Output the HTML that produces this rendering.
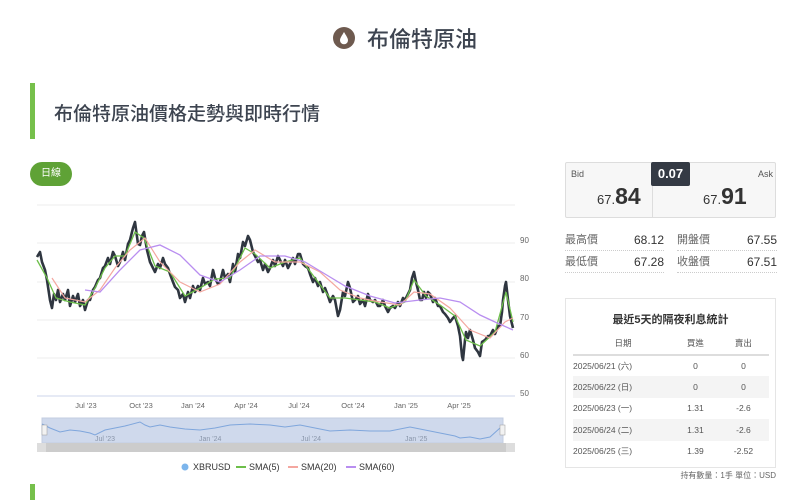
<!DOCTYPE html>
<html><head><meta charset="utf-8"><style>
*{margin:0;padding:0;box-sizing:border-box}
body{width:800px;height:500px;background:#fff;font-family:"Liberation Sans","Noto Sans CJK TC",sans-serif;color:#333;position:relative;overflow:hidden}
.abs{position:absolute}
.title{left:333px;top:22px;font-size:22px;color:#3d4450;display:flex;align-items:center;gap:12px;font-weight:500}
.drop{width:22px;height:22px;border-radius:50%;background:#6e5a4f;position:relative}
.h2bar{left:30px;top:83px;width:5px;height:56px;background:#76c04b}
.h2{left:54px;top:99px;font-size:19px;color:#3d4450;font-weight:500}
.btn{left:30px;top:162px;width:42px;height:24px;border-radius:12px;background:#5fa236;color:#fff;font-size:10px;text-align:center;line-height:24px}
.quote{left:565px;top:162px;width:211px;height:56px;border:1px solid #ddd;background:#f7f7f7;border-radius:2px}
.spread{left:651px;top:162px;width:39px;height:24px;background:#343a44;color:#fff;font-size:13px;font-weight:bold;text-align:center;line-height:24px;border-radius:2px}
.lbl{font-size:9px;color:#555}
.big{font-size:23px;color:#333;font-weight:bold}
.sm{font-size:13px;color:#333}
.row{font-size:11px;color:#666;border-bottom:1px dotted #ccc;height:22px;line-height:22px}
.row b{float:right;font-weight:normal;color:#333;font-size:12px}
.tbl{left:565px;top:298px;width:211px;height:170px;border:1px solid #e5e5e5}
.tbl table{width:196px;margin-left:7px;border-collapse:collapse;font-size:8.5px;color:#555}
.tbl td{height:21.5px}
.tbl tr.g td{background:#f4f4f4}
</style></head><body>
<div class="abs title"><div class="drop"><svg width="22" height="22" viewBox="0 0 22 22" style="position:absolute;left:0;top:0"><path d="M11 5 C9 8.5 7 11 7 13.3 A4 4 0 0 0 15 13.3 C15 11 13 8.5 11 5Z" fill="#fff"/></svg></div><span>布倫特原油</span></div>
<div class="abs h2bar"></div>
<div class="abs h2">布倫特原油價格走勢與即時行情</div>
<div class="abs btn">日線</div>

<svg class="abs" style="left:0;top:195px" width="550" height="285" viewBox="0 195 550 285">
<g stroke="#ececec" stroke-width="1">
<line x1="37" y1="205" x2="515" y2="205"/><line x1="37" y1="243" x2="515" y2="243"/><line x1="37" y1="282" x2="515" y2="282"/><line x1="37" y1="320" x2="515" y2="320"/><line x1="37" y1="358" x2="515" y2="358"/></g>
<line x1="37" y1="396" x2="515" y2="396" stroke="#ccd6eb"/>
<g font-size="8" fill="#666"><text x="520" y="243">90</text><text x="520" y="281">80</text><text x="520" y="320">70</text><text x="520" y="358">60</text><text x="520" y="396">50</text></g>
<g font-size="7.5" fill="#666" text-anchor="middle"><text x="86" y="408">Jul '23</text><text x="141" y="408">Oct '23</text><text x="193" y="408">Jan '24</text><text x="246" y="408">Apr '24</text><text x="299" y="408">Jul '24</text><text x="353" y="408">Oct '24</text><text x="406" y="408">Jan '25</text><text x="459" y="408">Apr '25</text></g>
<polyline fill="none" stroke="#2f3640" stroke-width="2.6" stroke-linejoin="round" points="37,257 40,252 42,262 45,270 47,280 50,300 52,308 54,294 56,300 58,290 60,302 63,294 65,300 68,290 70,306 73,296 75,302 78,294 80,306 83,300 85,310 88,300 90,300 93,290 95,287 98,280 100,278 103,268 105,266 108,258 110,264 113,252 115,256 118,266 120,262 123,252 125,260 128,244 130,240 133,228 135,222 138,244 140,245 142,236 144,232 147,250 150,262 153,268 155,272 158,264 160,268 163,258 165,264 168,268 170,274 173,282 175,287 178,290 180,298 183,294 185,302 188,292 190,298 193,286 195,292 198,286 200,290 203,278 205,284 208,282 210,286 213,270 215,278 218,284 220,282 223,270 225,278 228,274 230,282 233,264 235,272 238,254 240,258 243,242 245,246 248,236 250,240 253,252 255,256 258,262 260,260 263,270 265,264 268,272 270,268 273,260 275,266 278,256 280,260 283,266 285,260 288,268 290,264 293,258 295,264 298,254 300,254 303,264 305,266 308,268 310,274 313,282 315,278 318,286 320,282 323,292 325,288 328,296 330,302 333,296 335,300 338,316 340,310 343,292 345,296 348,282 350,288 353,302 355,300 358,296 360,304 363,300 365,306 368,294 370,300 373,302 375,300 378,306 380,306 383,300 385,306 388,312 390,308 393,306 395,308 398,302 400,306 403,298 405,300 408,294 410,290 412,278 414,272 416,282 418,290 420,300 422,300 424,292 426,298 428,292 430,294 433,302 435,298 438,306 440,306 443,312 445,314 448,318 450,322 453,318 455,316 458,326 460,336 462,356 463,360 465,340 466,332 468,338 470,330 473,340 475,348 478,352 480,356 482,342 485,340 488,336 490,336 493,330 495,334 498,326 500,326 502,312 503,300 505,286 506,282 508,300 510,316 512,324 513,328"/>
<polyline fill="none" stroke="#6dbf4a" stroke-width="1.3" points="37,260 47,278 56,298 70,302 85,305 95,288 105,268 115,256 125,256 135,232 144,238 155,266 170,272 185,296 200,288 215,279 230,278 245,248 255,254 270,268 285,262 300,258 315,278 330,298 345,298 360,300 375,302 390,308 405,302 414,280 426,296 440,305 455,316 466,340 480,346 495,332 506,292 513,322"/>
<polyline fill="none" stroke="#f4a7a0" stroke-width="1.2" points="52,278 65,298 85,302 100,290 115,268 130,250 145,238 160,262 180,282 200,292 220,284 240,262 255,250 275,262 300,262 320,272 340,290 360,298 380,302 400,305 414,292 430,294 450,308 470,330 490,338 505,322 513,318"/>
<polyline fill="none" stroke="#b98ef0" stroke-width="1.3" points="85,290 100,292 120,270 140,250 160,245 180,255 200,275 220,282 240,270 260,256 285,256 305,262 325,274 345,286 370,296 395,303 420,300 440,298 460,302 480,315 495,322 513,330"/>
<rect x="42" y="418" width="461" height="25" fill="#cfd9ec" stroke="#c3cde0"/>
<polyline fill="none" stroke="#7fa6dc" stroke-width="1" points="42,424 50,428 60,432 70,430 80,431 90,433 95,435 105,430 115,428 125,426 140,422 145,425 150,427 160,425 170,427 185,429 200,430 215,428 230,425 250,424 270,425 285,427 300,425 315,428 330,431 350,430 370,431 390,431 410,427 425,430 440,433 455,436 460,438 470,437 480,439 490,437 500,428"/>
<g font-size="7" fill="#8a96aa"><text x="95" y="441">Jul '23</text><text x="199" y="441">Jan '24</text><text x="301" y="441">Jul '24</text><text x="405" y="441">Jan '25</text></g>
<rect x="42" y="425" width="5" height="10" fill="#f2f2f2" stroke="#999" stroke-width=".5"/><rect x="500" y="425" width="5" height="10" fill="#f2f2f2" stroke="#999" stroke-width=".5"/>
<rect x="37" y="443" width="478" height="9" fill="#ddd"/><rect x="46" y="443" width="460" height="9" fill="#ccc"/>
<g font-size="9" fill="#333"><circle cx="185" cy="467" r="3.5" fill="#7cb5ec"/><text x="193" y="470">XBRUSD</text>
<line x1="236" y1="467" x2="246" y2="467" stroke="#6dbf4a" stroke-width="2"/><text x="249" y="470">SMA(5)</text>
<line x1="288" y1="467" x2="298" y2="467" stroke="#f4a7a0" stroke-width="2"/><text x="301" y="470">SMA(20)</text>
<line x1="346" y1="467" x2="356" y2="467" stroke="#b98ef0" stroke-width="2"/><text x="359" y="470">SMA(60)</text></g>
</svg>
<div class="abs" style="left:30px;top:484px;width:5px;height:16px;background:#76c04b"></div>

<div class="abs quote"><div style="position:absolute;left:86px;top:0;width:1px;height:54px;background:#ddd"></div></div>
<div class="abs lbl" style="left:571px;top:169px">Bid</div>
<div class="abs lbl" style="left:758px;top:169px">Ask</div>
<div class="abs" style="left:597px;top:183px"><span class="sm">67.</span><span class="big">84</span></div>
<div class="abs" style="left:703px;top:183px"><span class="sm">67.</span><span class="big">91</span></div>
<div class="abs spread">0.07</div>
<div class="abs" style="left:565px;top:229px;width:99px"><div class="row">最高價<b>68.12</b></div><div class="row">最低價<b>67.28</b></div></div>
<div class="abs" style="left:677px;top:229px;width:100px"><div class="row">開盤價<b>67.55</b></div><div class="row">收盤價<b>67.51</b></div></div>

<div class="abs tbl">
<div style="text-align:center;font-size:11px;font-weight:bold;color:#333;margin-top:12px">最近5天的隔夜利息統計</div>
<table style="margin-top:6px">
<tr style="border-bottom:2px solid #ddd"><td style="text-align:center;width:100px">日期</td><td style="text-align:center">買進</td><td style="text-align:center">賣出</td></tr>
<tr><td>2025/06/21 (六)</td><td style="text-align:center">0</td><td style="text-align:center">0</td></tr>
<tr class="g"><td>2025/06/22 (日)</td><td style="text-align:center">0</td><td style="text-align:center">0</td></tr>
<tr><td>2025/06/23 (一)</td><td style="text-align:center">1.31</td><td style="text-align:center">-2.6</td></tr>
<tr class="g"><td>2025/06/24 (二)</td><td style="text-align:center">1.31</td><td style="text-align:center">-2.6</td></tr>
<tr><td>2025/06/25 (三)</td><td style="text-align:center">1.39</td><td style="text-align:center">-2.52</td></tr>
</table></div>
<div class="abs" style="right:24px;top:470px;font-size:8px;color:#666">持有數量：1手 單位：USD</div>
</body></html>
